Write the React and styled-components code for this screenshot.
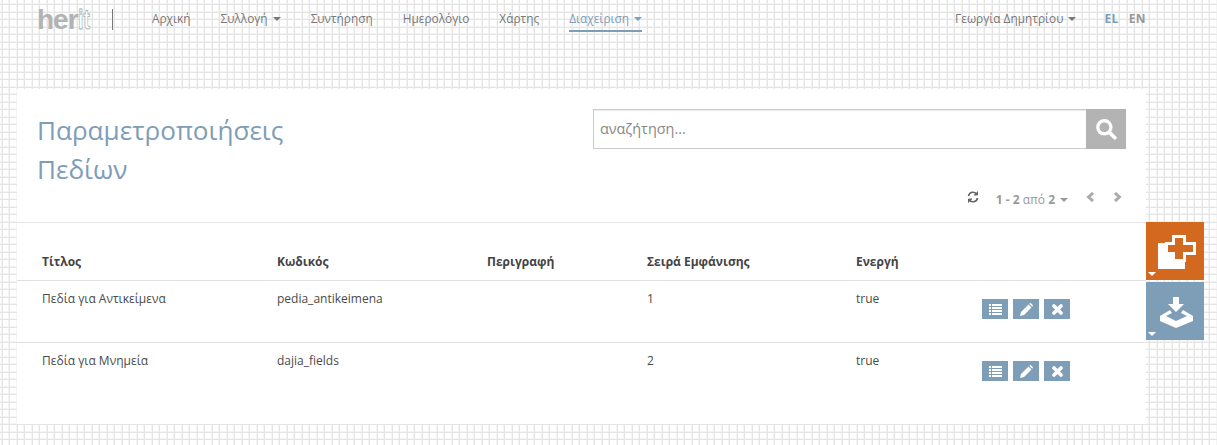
import styled, { createGlobalStyle } from "styled-components";

const GRID = `url("data:image/svg+xml,%3Csvg xmlns='http://www.w3.org/2000/svg' width='15' height='15'%3E%3Cpath d='M1 0h1v15h-1zM8 0h1v15h-1zM0 3h15v1h-15zM0 11h15v1h-15z' fill='%23f4f4f4'/%3E%3Cpath d='M2 0h1v15h-1zM9 0h1v15h-1zM0 4h15v1h-15zM0 12h15v1h-15z' fill='%23e5e5e5'/%3E%3C/svg%3E")`;

const GlobalStyle = createGlobalStyle`
  html, body {
    margin: 0;
    padding: 0;
    height: 445px;
    overflow: hidden;
    background-color: #fff;
    background-image: ${GRID};
    font-family: "Open Sans", "Noto Sans", sans-serif;
    color: #555;
  }
  * {
    box-sizing: border-box;
  }
`;

const Page = styled.div`
  width: 1217px;
  height: 445px;
  display: flex;
  flex-direction: column;
`;

const NavBar = styled.div`
  height: 37px;
  display: flex;
  align-items: flex-start;
  padding: 0 71px 0 37px;
`;

const Logo = styled.div`
  width: 76px;
  height: 21px;
  margin-top: 9px;
  border-right: 1px solid #777;
  font-family: "Liberation Sans", sans-serif;
  font-weight: 700;
  font-size: 28px;
  line-height: 21px;
  letter-spacing: -1px;
  color: #b3b3b3;
  white-space: nowrap;
`;

const LogoThin = styled.span`
  display: inline-block;
  color: #fff;
  -webkit-text-stroke: 0.8px #aaa;
  letter-spacing: 0;
  transform: scaleX(0.7);
  transform-origin: left center;
`;

const NavLinks = styled.div`
  display: flex;
  gap: 30px;
  margin-left: 39px;
`;

const NavLink = styled.div`
  font-size: 11.85px;
  height: 32px;
  line-height: 37px;
  color: ${(props) => (props.active ? "#7e9db7" : "#777")};
  border-bottom: ${(props) => (props.active ? "2px solid #7e9db7" : "none")};
  white-space: nowrap;
`;

const Caret = styled.span`
  display: inline-block;
  margin-left: 5px;
  vertical-align: 2px;
  border-left: 4px solid transparent;
  border-right: 4px solid transparent;
  border-top: 4px solid currentColor;
`;

const NavRight = styled.div`
  margin-left: auto;
  display: flex;
`;

const Lang = styled.div`
  font-size: 12px;
  font-weight: 700;
  letter-spacing: 0.4px;
  line-height: 37px;
  margin-left: ${(props) => props.gap}px;
  color: ${(props) => (props.active ? "#7e9db7" : "#999")};
`;

const Body = styled.div`
  display: flex;
  align-items: flex-start;
  margin-top: 52px;
  padding-left: 17px;
`;

const Panel = styled.div`
  width: 1129px;
  height: 335px;
  background: #fff;
  display: flex;
  flex-direction: column;
`;

const PanelHead = styled.div`
  display: flex;
  justify-content: space-between;
  height: 134px;
  border-bottom: 1px solid #e6e6e6;
  padding: 20px 20px 0 20px;
`;

const Title = styled.h1`
  margin: 2px 0 0;
  width: 300px;
  font-size: 26.1px;
  font-weight: 400;
  line-height: 39px;
  color: #7e9db7;
`;

const HeadRight = styled.div`
  width: 533px;
  display: flex;
  flex-direction: column;
`;

const Search = styled.div`
  display: flex;
  height: 40px;
`;

const SearchInput = styled.div`
  flex: 1;
  border: 1px solid #ccc;
  border-right: none;
  box-shadow: inset 0 1px 1px rgba(0, 0, 0, 0.08);
  font-size: 14.4px;
  line-height: 38px;
  padding-left: 6px;
  color: #888;
`;

const SearchButton = styled.div`
  width: 40px;
  height: 40px;
  background: #b3b3b3;
  display: flex;
  align-items: center;
  justify-content: center;
`;

const Pager = styled.div`
  display: flex;
  align-items: center;
  justify-content: flex-end;
  margin-top: 39px;
  padding-right: 4px;
  height: 22px;
  font-size: 12px;
  color: #999;
`;

const PagerInfo = styled.span`
  margin-left: 17px;
  b {
    font-weight: 700;
  }
`;

const PagerIcon = styled.svg`
  display: block;
  margin: 0 0 4px ${(props) => props.gap}px;
`;

const Table = styled.div`
  display: flex;
  flex-direction: column;
`;

const Row = styled.div`
  display: grid;
  grid-template-columns: 235px 210px 160px 209px 1fr;
  height: ${(props) => props.height}px;
  padding-left: 25px;
  font-size: 12px;
  color: #4a4a4a;
  border-bottom: ${(props) => (props.last ? "none" : "1px solid #e0e0e0")};
  line-height: ${(props) => props.lh}px;
`;

const HeadCell = styled.div`
  font-weight: 700;
  color: #444;
`;

const Cell = styled.div`
  display: flex;
  justify-content: space-between;
`;

const Actions = styled.div`
  display: flex;
  gap: 5px;
  margin: 18px 76px 0 0;
`;

const ActionButton = styled.div`
  width: 26px;
  height: 20px;
  background: #7e9db7;
  display: flex;
  align-items: center;
  justify-content: center;
`;

const SideTools = styled.div`
  display: flex;
  flex-direction: column;
  gap: 2px;
  margin-top: 133px;
`;

const SideTool = styled.div`
  position: relative;
  width: 58px;
  height: 58px;
  background: ${(props) => props.color};
  svg {
    display: block;
  }
`;

const SideCaret = styled.span`
  position: absolute;
  left: 2px;
  bottom: 4px;
  border-left: 4px solid transparent;
  border-right: 4px solid transparent;
  border-top: 4px solid #fff;
`;

const ListIcon = () => (
  <svg width="13" height="11" viewBox="0 0 13 11" fill="#fff">
    <rect x="0" y="0" width="2" height="2" />
    <rect x="3" y="0" width="10" height="2" />
    <rect x="0" y="3" width="2" height="2" />
    <rect x="3" y="3" width="10" height="2" />
    <rect x="0" y="6" width="2" height="2" />
    <rect x="3" y="6" width="10" height="2" />
    <rect x="0" y="9" width="2" height="2" />
    <rect x="3" y="9" width="10" height="2" />
  </svg>
);

const PencilIcon = () => (
  <svg width="13" height="13" viewBox="0 0 13 13" fill="#fff">
    <path d="M0 13 L1 9 L8.5 1.5 L11.5 4.5 L4 12 Z M9.3 0.8 L10 0.2 Q10.5 -0.1 11 0.3 L12.7 2 Q13.1 2.5 12.8 3 L12.2 3.7 Z" />
  </svg>
);

const CrossIcon = () => (
  <svg width="11" height="11" viewBox="0 0 11 11">
    <path d="M2 2 L9 9 M9 2 L2 9" stroke="#fff" strokeWidth="3.6" strokeLinecap="round" />
  </svg>
);

const RowActions = () => (
  <Actions>
    <ActionButton>
      <ListIcon />
    </ActionButton>
    <ActionButton>
      <PencilIcon />
    </ActionButton>
    <ActionButton>
      <CrossIcon />
    </ActionButton>
  </Actions>
);

const rows = [
  { title: "Πεδία για Αντικείμενα", code: "pedia_antikeimena", order: "1" },
  { title: "Πεδία για Μνημεία", code: "dajia_fields", order: "2" },
];

const App = () => {
  return (
    <Page>
      <GlobalStyle />
      <NavBar>
        <Logo>
          her<LogoThin>it</LogoThin>
        </Logo>
        <NavLinks>
          <NavLink>Αρχική</NavLink>
          <NavLink>
            Συλλογή
            <Caret />
          </NavLink>
          <NavLink>Συντήρηση</NavLink>
          <NavLink>Ημερολόγιο</NavLink>
          <NavLink>Χάρτης</NavLink>
          <NavLink active>
            Διαχείριση
            <Caret />
          </NavLink>
        </NavLinks>
        <NavRight>
          <NavLink>
            Γεωργία Δημητρίου
            <Caret />
          </NavLink>
          <Lang active gap={28}>
            EL
          </Lang>
          <Lang gap={10}>EN</Lang>
        </NavRight>
      </NavBar>
      <Body>
        <Panel>
          <PanelHead>
            <Title>Παραμετροποιήσεις Πεδίων</Title>
            <HeadRight>
              <Search>
                <SearchInput>αναζήτηση...</SearchInput>
                <SearchButton>
                  <svg width="22" height="22" viewBox="0 0 20 20" fill="none">
                    <circle cx="8.5" cy="8.5" r="6" stroke="#fff" strokeWidth="3" />
                    <path d="M13 13 L18 18" stroke="#fff" strokeWidth="3.4" strokeLinecap="round" />
                  </svg>
                </SearchButton>
              </Search>
              <Pager>
                <PagerIcon gap={0} width="12" height="12" viewBox="0 0 12 12" fill="none" stroke="#666" strokeWidth="1.6">
                  <path d="M1.5 5 A4.6 4.6 0 0 1 10 3.5 M10.5 7 A4.6 4.6 0 0 1 2 8.5" />
                  <path d="M10.5 0.5 V4 H7 M1.5 11.5 V8 H5" fill="#666" strokeWidth="1" />
                </PagerIcon>
                <PagerInfo>
                  <b>1 - 2</b> από <b>2</b>
                  <Caret />
                </PagerInfo>
                <PagerIcon gap={18} width="9" height="10" viewBox="0 0 9 10" fill="none" stroke="#aaa" strokeWidth="3">
                  <path d="M7 1 L2.6 5 L7 9" />
                </PagerIcon>
                <PagerIcon gap={18} width="9" height="10" viewBox="0 0 9 10" fill="none" stroke="#aaa" strokeWidth="3">
                  <path d="M2 1 L6.4 5 L2 9" />
                </PagerIcon>
              </Pager>
            </HeadRight>
          </PanelHead>
          <Table>
            <Row height={58} lh={78}>
              <HeadCell>Τίτλος</HeadCell>
              <HeadCell>Κωδικός</HeadCell>
              <HeadCell>Περιγραφή</HeadCell>
              <HeadCell>Σειρά Εμφάνισης</HeadCell>
              <HeadCell>Ενεργή</HeadCell>
            </Row>
            {rows.map((row, index) => (
              <Row key={row.code} height={62} lh={36} last={index === rows.length - 1}>
                <div>{row.title}</div>
                <div>{row.code}</div>
                <div></div>
                <div>{row.order}</div>
                <Cell>
                  true
                  <RowActions />
                </Cell>
              </Row>
            ))}
          </Table>
        </Panel>
        <SideTools>
          <SideTool color="#d2691e">
            <svg width="58" height="58" viewBox="0 0 58 58">
              <rect x="12" y="21" width="27" height="26" fill="#fff" />
              <path d="M26 13 H40 V20 H50 V33 H40 V40 H26 V33 H19 V20 H26 Z" fill="#fff" />
              <path d="M29 16 H37 V23 H47 V30 H37 V37 H29 V30 H22 V23 H29 Z" fill="#d2691e" />
            </svg>
            <SideCaret />
          </SideTool>
          <SideTool color="#7e9db7">
            <svg width="58" height="58" viewBox="0 0 58 58" fill="#fff">
              <path d="M27 15 H33 V22 H38 L30 30 L22 22 H27 Z" />
              <path d="M14 34 L24 28 L26 31 L20 34 L30 39 L41 34 L35 31 L37 28 L47 34 V39 L30 46 L14 39 Z" />
            </svg>
            <SideCaret />
          </SideTool>
        </SideTools>
      </Body>
    </Page>
  );
};

export default App;
